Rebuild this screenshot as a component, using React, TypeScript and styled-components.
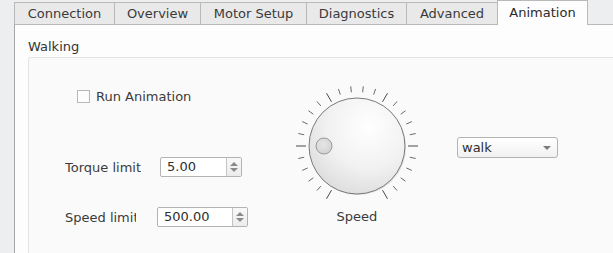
import { createGlobalStyle, styled } from 'styled-components';

const GlobalStyle = createGlobalStyle`
  html, body {
    margin: 0;
    padding: 0;
    background: #edeef0;
    overflow: hidden;
  }
  body {
    font-family: 'DejaVu Sans', 'Liberation Sans', sans-serif;
    font-size: 13px;
    color: #333333;
  }
`;

const Window = styled.div`
  width: 640px;
  height: 300px;
  padding-left: 14px;
  box-sizing: border-box;
  display: flex;
  flex-direction: column;
`;

const TabBar = styled.div`
  display: flex;
  align-items: flex-end;
  height: 24px;
`;

const Tab = styled.div<{ $active?: boolean; $w: number }>`
  box-sizing: border-box;
  width: ${(p) => p.$w}px;
  text-align: center;
  height: ${(p) => (p.$active ? '25px' : '22px')};
  padding-top: ${(p) => (p.$active ? '4px' : '3px')};
  line-height: 15px;
  white-space: nowrap;
  color: ${(p) => (p.$active ? '#2a2a2a' : '#3a3a3a')};
  background: ${(p) => (p.$active ? '#fdfdfd' : '#e9e9ea')};
  border: 1px solid #b9b9b9;
  border-bottom: none;
  border-right: ${(p) => (p.$active ? '1px solid #b9b9b9' : 'none')};
  margin-bottom: ${(p) => (p.$active ? '-1px' : '0')};
  position: relative;
  z-index: ${(p) => (p.$active ? 1 : 0)};
`;

const Pane = styled.div`
  flex: 1;
  background: #fdfdfd;
  border-top: 1px solid #b9b9b9;
  border-left: 1px solid #a3a6aa;
  padding: 14px 0 0 13px;
  display: flex;
  flex-direction: column;
`;

const GroupTitle = styled.div`
  line-height: 15px;
  color: #333;
  margin-bottom: 3px;
`;

const GroupBox = styled.div`
  flex: 1;
  background: #fafafa;
  border: 1px solid #e3e3e3;
  border-radius: 2px;
  display: flex;
  padding-left: 36px;
`;

const LeftColumn = styled.div`
  width: 229px;
  display: flex;
  flex-direction: column;
  padding-top: 31px;
`;

const CheckRow = styled.label`
  display: flex;
  align-items: center;
  gap: 6px;
  height: 15px;
  margin-left: 12px;
  color: #3a3a3a;
`;

const CheckBox = styled.span`
  width: 13px;
  height: 13px;
  box-sizing: border-box;
  border: 1px solid #b8b8b8;
  background: #fdfdfd;
`;

const FieldRow = styled.div<{ $top: number }>`
  display: flex;
  align-items: center;
  margin-top: ${(p) => p.$top}px;
  height: 20px;
`;

const FieldCell = styled.span<{ $w: number }>`
  width: ${(p) => p.$w}px;
  flex-shrink: 0;
`;

const FieldLabel = styled.span<{ $clip?: number }>`
  display: inline-block;
  max-width: ${(p) => (p.$clip ? `${p.$clip}px` : 'none')};
  overflow: hidden;
  white-space: nowrap;
  vertical-align: top;
  color: #3a3a3a;
`;

const SpinBox = styled.div<{ $w: number }>`
  width: ${(p) => p.$w}px;
  height: 20px;
  box-sizing: border-box;
  border: 1px solid #b3b3b3;
  border-radius: 2px;
  background: #ffffff;
  display: flex;
`;

const SpinText = styled.span`
  flex: 1;
  padding-left: 6px;
  line-height: 18px;
  color: #2e2e2e;
`;

const SpinButtons = styled.div`
  width: 14px;
  border-left: 1px solid #c4c4c4;
  background: linear-gradient(#f8f8f8, #ececec);
  display: flex;
  flex-direction: column;
  align-items: center;
  justify-content: center;
  gap: 2px;
`;

const Arrow = styled.span<{ $down?: boolean }>`
  width: 0;
  height: 0;
  border-left: 4px solid transparent;
  border-right: 4px solid transparent;
  ${(p) =>
    p.$down ? 'border-top: 4px solid #8a8a8a;' : 'border-bottom: 4px solid #8a8a8a;'}
`;

const KnobColumn = styled.div`
  width: 126px;
  display: flex;
  flex-direction: column;
  align-items: center;
  padding-top: 25px;
`;

const KnobLabel = styled.div`
  line-height: 15px;
  color: #3a3a3a;
`;

const Combo = styled.div`
  margin-left: 37px;
  margin-top: 79px;
  width: 101px;
  height: 21px;
  box-sizing: border-box;
  border: 1px solid #b3b3b3;
  border-radius: 3px;
  background: linear-gradient(#ffffff, #f1f1f1);
  display: flex;
  align-items: center;
  padding: 0 6px 0 4px;
  justify-content: space-between;
  color: #2e2e2e;
`;

const ComboArrow = styled.span`
  width: 0;
  height: 0;
  border-left: 4.5px solid transparent;
  border-right: 4.5px solid transparent;
  border-top: 4px solid #7c7c7c;
`;

const tabs: [string, number][] = [
  ['Connection', 100],
  ['Overview', 86],
  ['Motor Setup', 106],
  ['Diagnostics', 100],
  ['Advanced', 91],
  ['Animation', 91],
];

const Knob = () => {
  const c = 63;
  const ticks = [];
  for (let i = 0; i <= 25; i++) {
    const deg = 240 - i * 12;
    const a = (deg * Math.PI) / 180;
    const major = i % 5 === 0;
    const r1 = major ? 51 : 54;
    const r2 = major ? 61 : 60;
    ticks.push(
      <line
        key={i}
        x1={c + r1 * Math.cos(a)}
        y1={c - r1 * Math.sin(a)}
        x2={c + r2 * Math.cos(a)}
        y2={c - r2 * Math.sin(a)}
        stroke={major ? '#4a4a4a' : '#6a6a6a'}
        strokeWidth={1}
      />
    );
  }
  return (
    <svg width="126" height="126" viewBox="0 0 126 126">
      <defs>
        <radialGradient id="knobFill" cx="0.62" cy="0.3" r="0.8">
          <stop offset="0" stopColor="#ffffff" />
          <stop offset="0.55" stopColor="#f1f1f1" />
          <stop offset="1" stopColor="#d9d9d9" />
        </radialGradient>
        <radialGradient id="dotFill" cx="0.45" cy="0.4" r="0.7">
          <stop offset="0" stopColor="#e6e6e6" />
          <stop offset="1" stopColor="#cfcfcf" />
        </radialGradient>
      </defs>
      {ticks}
      <circle cx={c + 1} cy={c + 1} r={48} fill="#c8c8c8" opacity={0.5} />
      <circle cx={c} cy={c} r={48} fill="url(#knobFill)" stroke="#7a7a7a" strokeWidth={1} />
      <circle cx={c - 33} cy={c} r={8} fill="url(#dotFill)" stroke="#9a9a9a" strokeWidth={1} />
    </svg>
  );
};

export default function App() {
  return (
    <>
      <GlobalStyle />
      <Window>
        <TabBar>
          {tabs.map(([t, w]) => (
            <Tab key={t} $w={w} $active={t === 'Animation'}>
              {t}
            </Tab>
          ))}
        </TabBar>
        <Pane>
          <GroupTitle>Walking</GroupTitle>
          <GroupBox>
            <LeftColumn>
              <CheckRow>
                <CheckBox />
                Run Animation
              </CheckRow>
              <FieldRow $top={53}>
                <FieldCell $w={95}>
                  <FieldLabel>Torque limit</FieldLabel>
                </FieldCell>
                <SpinBox $w={82}>
                  <SpinText>5.00</SpinText>
                  <SpinButtons>
                    <Arrow />
                    <Arrow $down />
                  </SpinButtons>
                </SpinBox>
              </FieldRow>
              <FieldRow $top={30}>
                <FieldCell $w={92}>
                  <FieldLabel $clip={71}>Speed limit</FieldLabel>
                </FieldCell>
                <SpinBox $w={91}>
                  <SpinText>500.00</SpinText>
                  <SpinButtons>
                    <Arrow />
                    <Arrow $down />
                  </SpinButtons>
                </SpinBox>
              </FieldRow>
            </LeftColumn>
            <KnobColumn>
              <Knob />
              <KnobLabel>Speed</KnobLabel>
            </KnobColumn>
            <Combo>
              walk
              <ComboArrow />
            </Combo>
          </GroupBox>
        </Pane>
      </Window>
    </>
  );
}
